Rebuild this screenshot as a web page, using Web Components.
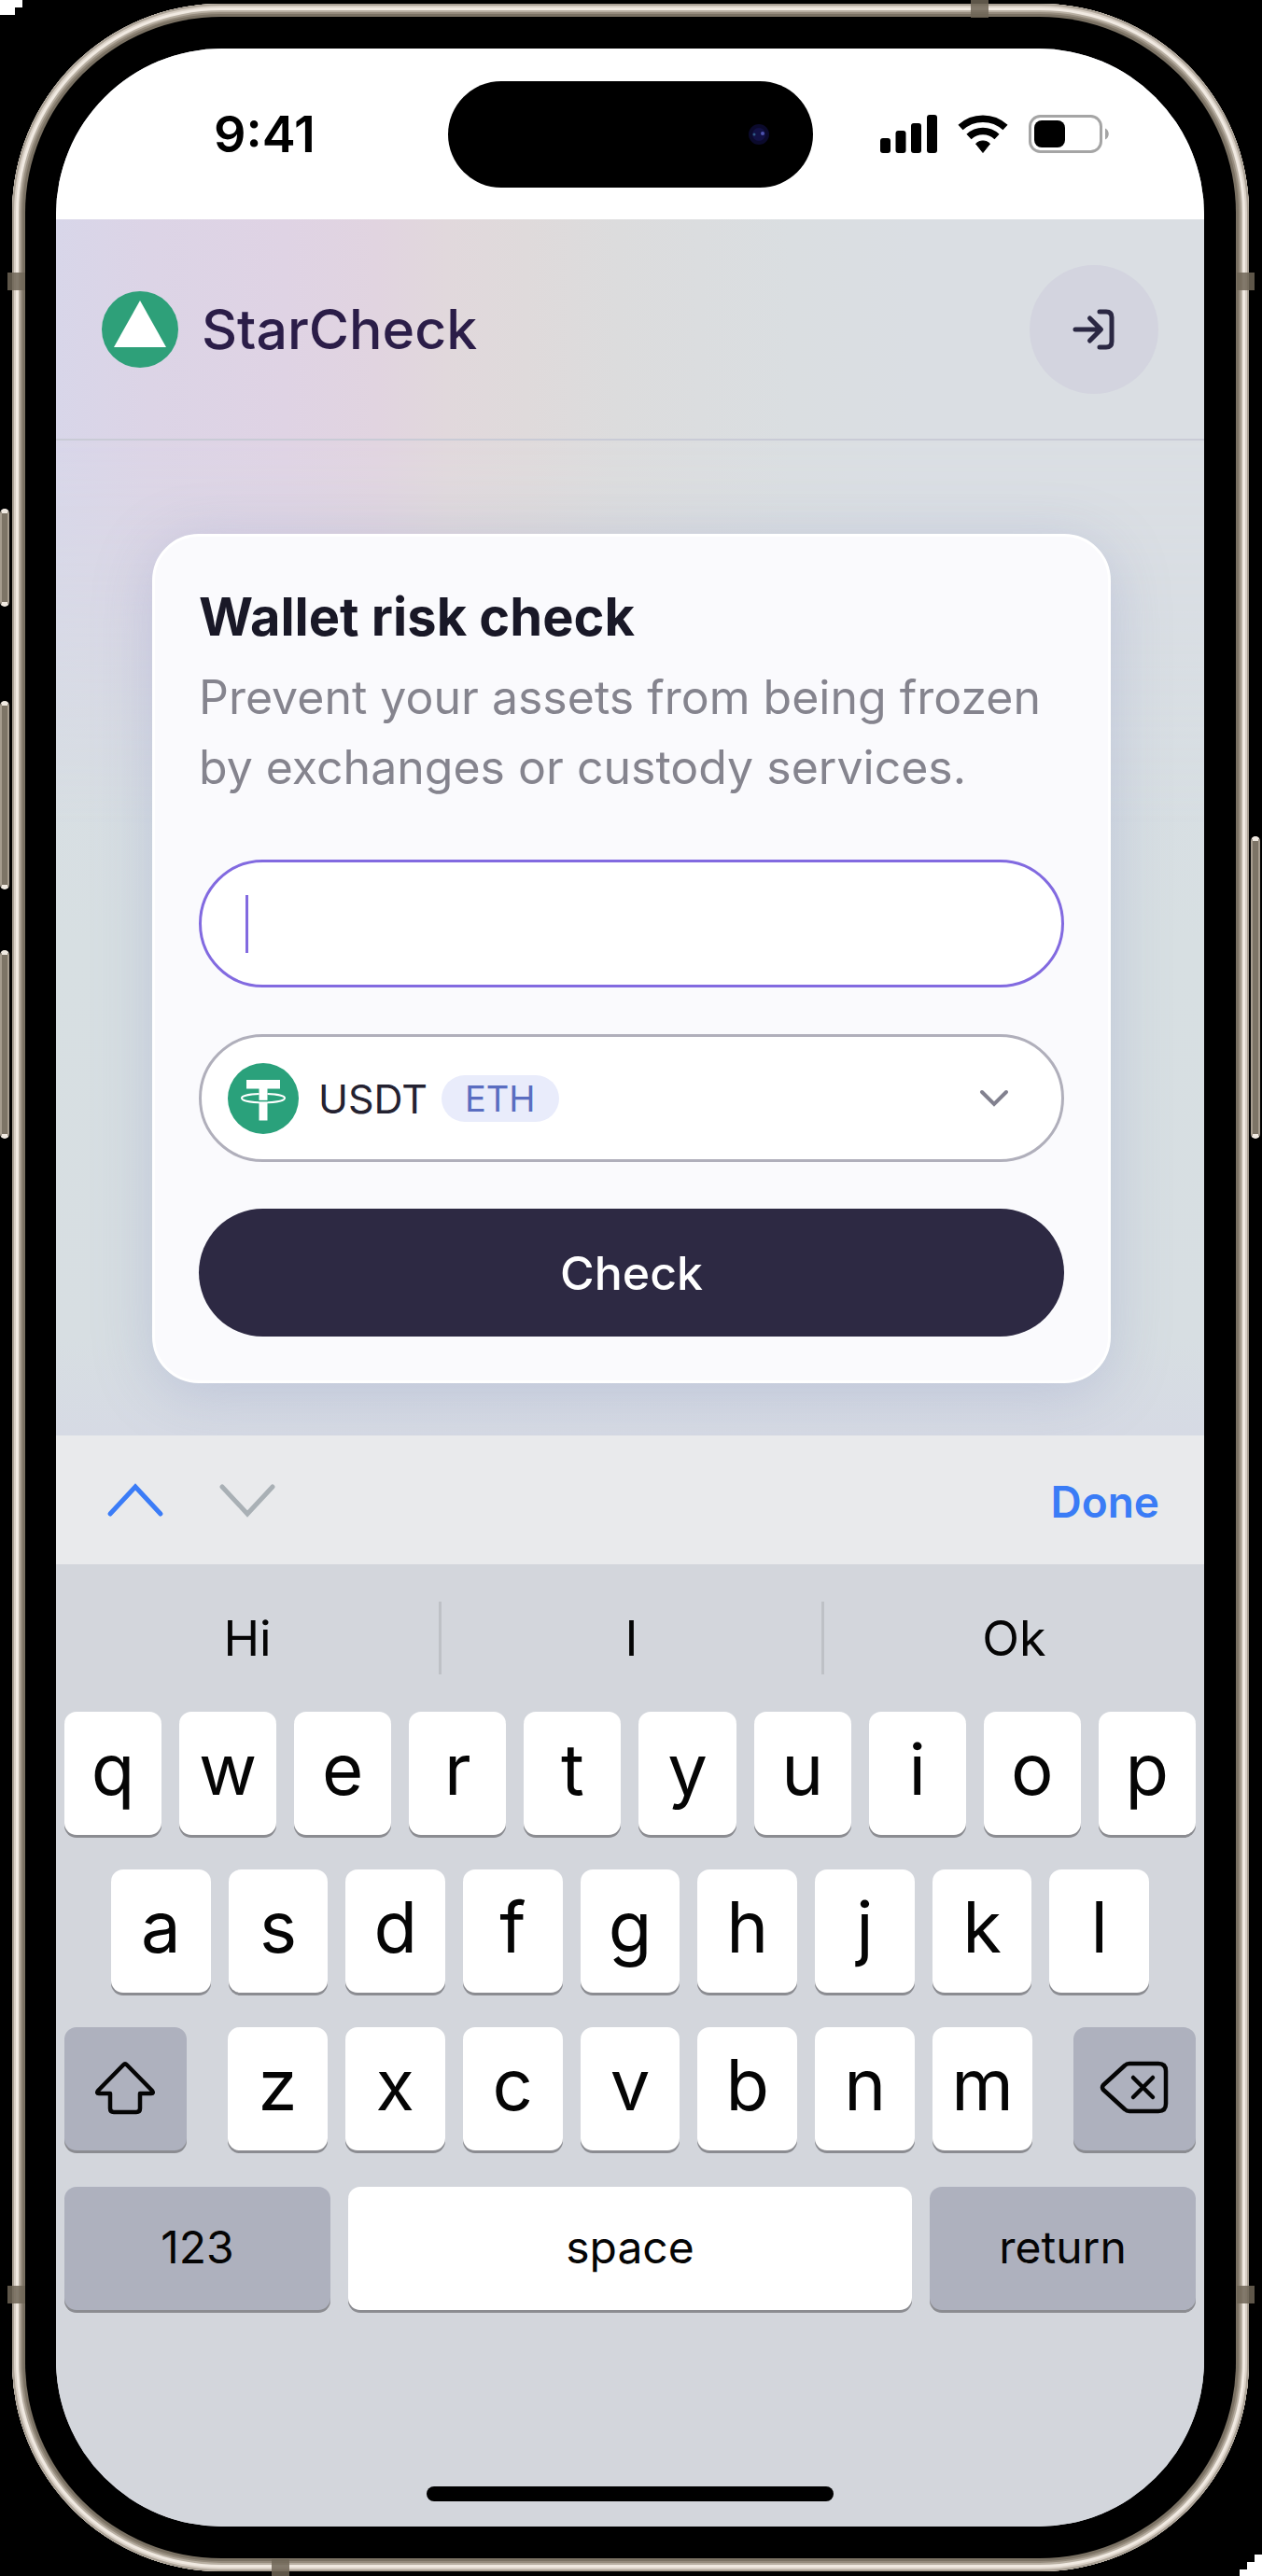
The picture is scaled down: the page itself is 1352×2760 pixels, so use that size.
<!DOCTYPE html>
<html lang="en">
<head>
<meta charset="utf-8">
<meta name="viewport" content="width=device-width, initial-scale=1">
<title>StarCheck – Wallet risk check</title>
<style>
  html, body { margin: 0; background: #000; }
  body { font-family: Inter, "Liberation Sans", sans-serif; color: #050505; }
</style>
</head>
<body>
<phone-frame>
  <status-bar></status-bar>
  <app-screen>
    <app-header></app-header>
    <risk-card></risk-card>
  </app-screen>
  <input-toolbar></input-toolbar>
  <soft-keyboard></soft-keyboard>
</phone-frame>

<script>
const define = (name, html, setup) => {
  const template = document.createElement('template');
  template.innerHTML = html;
  customElements.define(name, class extends HTMLElement {
    constructor() {
      super();
      this.attachShadow({ mode: 'open' }).append(template.content.cloneNode(true));
      if (setup) setup(this);
    }
  });
};

/* Device body: metal rim, bezel, side buttons, rounded screen */
define('phone-frame', `
<style>
  :host { display: block; position: relative; overflow: hidden; padding: 4px 14px 6px 13px; background: #000; }
  .rim {
    padding: 14px; border-radius: 224px; background: #7a7163;
    box-shadow: inset 0 0 0 2px #aaa195, inset 0 0 0 4px #d9d0c6, inset 0 0 0 7px #f0e9e1, inset 0 0 0 9px #b8afa2, inset 0 0 0 11px #958b7d;
  }
  .bezel { background: #000; border-radius: 210px; padding: 34px 34px 34px 33px; }
  .screen { display: flex; flex-direction: column; overflow: hidden; border-radius: 178px; background: #d3d6dc; }
  .side { position: absolute; width: 6px; border: 2px solid #a69c8e; border-top: 5px solid #f1eae2; border-bottom: 5px solid #f1eae2; border-radius: 5px; background: #7d7466; }
  .left { left: 0; } .right { right: 2px; }
  .band { position: absolute; width: 19px; height: 19px; background: #6e6556; opacity: .85; }
  .corner { position: absolute; background: #fff; }
</style>
<div class="rim"><div class="bezel"><div class="screen"><slot></slot></div></div></div>
<i class="side left" style="top:545px;height:95px"></i>
<i class="side left" style="top:751px;height:192px"></i>
<i class="side left" style="top:1018px;height:192px"></i>
<i class="side right" style="top:896px;height:314px"></i>
<i class="band" style="left:8px;top:292px"></i>
<i class="band" style="right:8px;top:292px"></i>
<i class="band" style="left:8px;bottom:293px"></i>
<i class="band" style="right:8px;bottom:293px"></i>
<i class="band" style="right:293px;top:0"></i>
<i class="band" style="left:291px;bottom:0"></i>
<i class="corner" style="left:0;top:0;width:24px;height:8px"></i>
<i class="corner" style="left:0;top:0;width:16px;height:16px"></i>
<i class="corner" style="right:0;bottom:0;width:8px;height:24px"></i>
<i class="corner" style="right:0;bottom:0;width:16px;height:16px"></i>
<i class="corner" style="right:0;bottom:0;width:24px;height:8px"></i>
`);

define('status-bar', `
<style>
  :host { display: grid; grid-template-columns: 1fr 391px 1fr; align-items: center; height: 183px; background: #fff; color: #000; }
  time { padding-left: 169px; font-size: 54px; line-height: 64px; font-weight: 600; }
  .island { display: flex; align-items: center; justify-content: flex-end; height: 114px; border-radius: 57px; background: #000; padding-right: 46px; box-sizing: border-box; }
  .icons { display: flex; align-items: center; gap: 22px; padding-left: 72px; }
  svg { display: block; flex: none; }
</style>
<time>9:41</time>
<div class="island">
  <svg width="24" height="24" viewBox="0 0 24 24" aria-hidden="true">
    <circle cx="12" cy="12" r="11" fill="#0b0a2c"/><circle cx="12" cy="12" r="7" fill="#121145"/>
    <circle cx="7" cy="12" r="1.500" fill="#2f5a84"/><circle cx="16" cy="11" r="2" fill="#4f54b0"/>
  </svg>
</div>
<div class="icons">
  <svg width="61" height="41" viewBox="0 0 61 41" aria-label="Signal">
    <rect x="0" y="25" width="11" height="16" rx="3"/><rect x="16.500" y="17" width="11" height="24" rx="3"/>
    <rect x="33" y="9" width="11" height="32" rx="3"/><rect x="50" y="0" width="11" height="41" rx="3"/>
  </svg>
  <svg width="54" height="41" viewBox="0 0 54 41" aria-label="Wi-Fi">
    <g fill="none" stroke="#000" stroke-width="7.500">
      <path d="M3 13.500C16.500 1 37.500 1 51 13.500"/>
      <path d="M12 23.500C20.500 15.500 33.500 15.500 42 23.500"/>
    </g>
    <path d="M19.500 31C23.500 27 30.500 27 34.500 31L27 40.500Z" stroke="#000" stroke-linejoin="round"/>
  </svg>
  <svg width="87" height="41" viewBox="0 0 87 41" aria-label="Battery">
    <rect x="1.500" y="1.500" width="76" height="38" rx="11" fill="none" stroke="#a5a5a5" stroke-width="3"/>
    <rect x="6" y="6" width="33" height="29" rx="8"/>
    <path d="M82 14.500c5 2 5 10 0 12Z" fill="#a5a5a5"/>
  </svg>
</div>
`);

define('app-screen', `
<style>
  :host { display: block; position: relative; isolation: isolate; overflow: hidden; background: linear-gradient(#dadfe4, #d8dee4 30%, #d7dfe2 60%, #d7dee2 92%, #d6dae4); }
  :host::before {
    content: ""; position: absolute; inset: 0; z-index: -1;
    background: linear-gradient(90deg, #d8d6e9 0, #dcd4e6 8%, #dfd3e4 20%, #e1d4e0 28%, #e1d8dc 34%, #dfdadb 41%, #dcdcdd 49%, #dbdddf 56%, #dadee1 64%, #dadee3 75%);
    -webkit-mask-image: linear-gradient(#000 18%, transparent 50%);
    mask-image: linear-gradient(#000 18%, transparent 50%);
  }
</style>
<slot></slot>
`);

define('app-header', `
<style>
  :host { display: flex; align-items: center; justify-content: space-between; height: 235px; padding: 0 49px; border-bottom: 2px solid #c9cbd6; }
  a { display: flex; align-items: center; gap: 25px; color: #2b1d48; text-decoration: none; font-size: 59px; line-height: 72px; font-weight: 500; }
  button { display: grid; place-items: center; width: 138px; height: 138px; padding: 0; border: 0; border-radius: 50%; background: #d3d4df; }
  svg { display: block; }
</style>
<a href="#">
  <svg width="82" height="82" viewBox="0 0 82 82" aria-hidden="true"><circle cx="41" cy="41" r="41" fill="#2ea079"/><path d="M41 10L69 60H13Z" fill="#fff"/></svg>
  <span>StarCheck</span>
</a>
<button type="button" aria-label="Sign in">
  <svg width="48" height="48" viewBox="0 0 48 48" fill="none" stroke="#2b2843" stroke-width="5" stroke-linecap="round" stroke-linejoin="round">
    <path d="M30 5H37Q43 5 43 11V37Q43 43 37 43H30"/><path d="M4 24H31M19.500 12L31.500 24L19.500 36"/>
  </svg>
</button>
`);

define('risk-card', `
<style>
  :host { display: block; padding: 100px 100px 56px 103px; }
  form { display: flex; flex-direction: column; padding: 47px; border: 3px solid #fff; border-radius: 50px; background: #fafafd; box-shadow: 0 10px 64px rgba(118, 130, 188, .27); }
  h1 { margin: 0 0 10px; font-size: 56px; line-height: 78px; font-weight: 700; color: #191827; }
  p { margin: 0 0 61px; font-size: 50px; line-height: 75px; color: #85848e; }
  .box, button { box-sizing: border-box; height: 137px; border-radius: 69px; }
  .box { display: flex; align-items: center; background: #fff; margin-bottom: 50px; border: 3px solid #b0afbb; }
  .address { position: relative; border-color: #826ae0; }
  .address::after { content: ""; position: absolute; left: 47px; width: 3px; height: 62px; background: #826ae0; }
  input { flex: 1; min-width: 0; height: 100%; padding: 0 47px; border: 0; outline: 0; background: none; border-radius: 66px; font: inherit; font-size: 50px; caret-color: transparent; }
  .token { padding: 0 55px 0 28px; }
  select { appearance: none; margin: 0 14px 0 21px; padding: 0; border: 0; background: none; font: inherit; font-size: 43px; line-height: 56px; color: #242231; }
  .chain { padding: 0 25px; border-radius: 25px; background: #e9ecfb; color: #5a6dc0; font-size: 38px; line-height: 50px; }
  .chevron { margin-left: auto; }
  svg { display: block; flex: none; }
  button { padding: 0; border: 0; background: #2d2943; color: #fff; font: inherit; font-size: 50px; font-weight: 500; }
</style>
<form>
  <h1>Wallet risk check</h1>
  <p>Prevent your assets from being frozen by exchanges or custody services.</p>
  <div class="box address"><input type="text" aria-label="Wallet address"></div>
  <label class="box token">
    <svg width="76" height="76" viewBox="0 0 76 76" aria-hidden="true">
      <circle cx="38" cy="38" r="38" fill="#2aa17b"/>
      <path d="M20 18H56V27.500H42.500V61.500H33.500V27.500H20Z" fill="#fff"/>
      <path d="M33.500 33C23 33.400 15 35 15 37.500C15 40.500 25 42.300 38 42.300S61 40.500 61 37.500C61 35 53 33.400 42.500 33" fill="none" stroke="#fff" stroke-width="2"/>
      <path d="M33 40.600H43" stroke="#2aa17b" stroke-width="1.500"/>
    </svg>
    <select aria-label="Token"><option>USDT</option></select>
    <span class="chain">ETH</span>
    <svg class="chevron" width="34" height="22" viewBox="0 0 34 22" fill="none" stroke="#82818f" stroke-width="4" stroke-linecap="round" aria-hidden="true"><path d="M4 4L17 17L30 4"/></svg>
  </label>
  <button type="button">Check</button>
</form>
`);

define('input-toolbar', `
<style>
  :host { display: flex; align-items: center; gap: 58px; height: 138px; padding: 0 48px 0 54px; background: #e9eaec; }
  button { display: block; padding: 0; border: 0; background: none; font: inherit; }
  .done { margin-left: auto; padding-top: 3px; font-size: 46px; line-height: 56px; font-weight: 600; color: #3a7cf6; }
  svg { display: block; fill: none; stroke-width: 5; stroke-linecap: round; }
</style>
<button type="button" aria-label="Previous field"><svg width="62" height="38" viewBox="0 0 62 38" stroke="#3b7cf7"><path d="M4 34L31 5L58 34"/></svg></button>
<button type="button" aria-label="Next field"><svg width="62" height="38" viewBox="0 0 62 38" stroke="#a9b0b5"><path d="M4 5L31 34L58 5"/></svg></button>
<button type="button" class="done">Done</button>
`);

define('key-cap', `
<style>
  :host { display: flex; flex: 1 1 0; min-width: 0; height: 132px; }
  :host([wide]) { flex: 0 0 131px; }
  :host([mode]) { flex: 0 0 285px; }
  button { flex: 1; min-width: 0; display: flex; align-items: center; justify-content: center; padding: 0 0 10px; border: 0; border-radius: 13px; background: #fff; box-shadow: 0 3px 0 #8b8c91; font: inherit; font-size: 76px; color: #050505; }
  :host([tone=dark]) button { background: #aeb1be; }
  :host([small]) button { font-size: 48px; padding: 0 0 4px; }
  :host([wide]) button { padding: 0 2px 2px 0; }
</style>
<button type="button"><slot></slot></button>
`);

define('soft-keyboard', `
<style>
  :host { display: block; background: #d3d6dc; }
  .suggestions { display: grid; grid-template-columns: repeat(3, 1fr); align-items: center; height: 158px; }
  .suggestions button { height: 78px; padding: 0; border: 0; background: none; font: inherit; font-size: 52px; color: #050505; }
  .suggestions button + button { border-left: 3px solid #bec1c6; }
  .rows { display: flex; flex-direction: column; gap: 37px; padding: 0 9px; }
  .row { display: flex; gap: 19px; }
  .home-row { padding: 0 50px; }
  .bottom-row { padding-top: 2px; }
  .letters { display: flex; flex: 1; gap: 19px; padding: 0 25px; }
  .indicator { width: 436px; height: 16px; margin: 189px auto 27px; border-radius: 8px; background: #000; }
  svg { display: block; fill: none; stroke: #050505; stroke-width: 4.500; stroke-linecap: round; stroke-linejoin: round; }
</style>
<div class="suggestions"><button type="button">Hi</button><button type="button">I</button><button type="button">Ok</button></div>
<div class="rows">
  <div class="row" data-keys="qwertyuiop"></div>
  <div class="row home-row" data-keys="asdfghjkl"></div>
  <div class="row">
    <key-cap wide tone="dark"><svg width="66" height="58" viewBox="0 0 66 58" aria-label="shift"><path d="M31 4.500Q33 2.500 35 4.500L62 32Q64 35 61 35H49V51Q49 55 45 55H21Q17 55 17 51V35H5Q2 35 4 32Z"/></svg></key-cap>
    <div class="letters" data-keys="zxcvbnm"></div>
    <key-cap wide tone="dark"><svg width="74" height="58" viewBox="0 0 74 58" aria-label="delete"><path d="M27 5Q29 3 32 3H63Q71 3 71 11V46Q71 54 63 54H32Q29 54 27 52L4 31Q2 28.500 4 26Z"/><path d="M36 18L57 39M57 18L36 39"/></svg></key-cap>
  </div>
  <div class="row bottom-row">
    <key-cap mode small tone="dark">123</key-cap>
    <key-cap small>space</key-cap>
    <key-cap mode small tone="dark">return</key-cap>
  </div>
</div>
<div class="indicator"></div>
`, host => {
  for (const row of host.shadowRoot.querySelectorAll('[data-keys]')) {
    for (const letter of row.dataset.keys) {
      const key = document.createElement('key-cap');
      key.textContent = letter;
      row.append(key);
    }
  }
});
</script>
</body>
</html>
